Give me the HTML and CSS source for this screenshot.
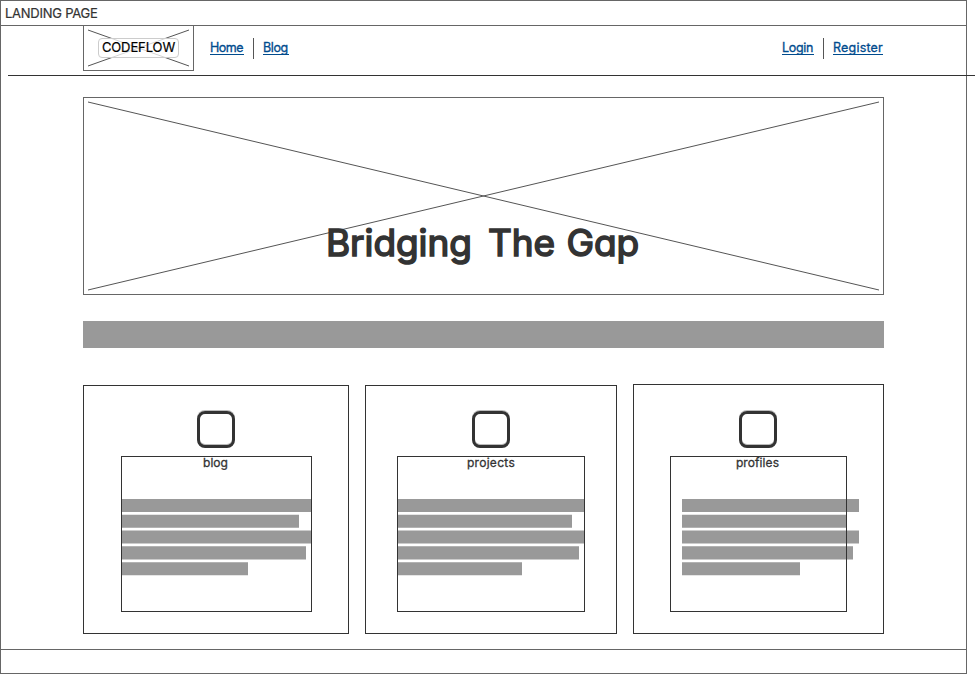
FILE: index.html
```html
<!DOCTYPE html>
<html lang="en">
<head>
<meta charset="utf-8">
<title>Landing Page</title>
<link rel="stylesheet" href="styles.css">
</head>
<body>
<div class="window">
  <header class="titlebar"><span>LANDING PAGE</span></header>
  <nav class="nav">
    <div class="logo">
      <svg class="cross" width="109" height="44" viewBox="0 0 109 44"><path d="M4 4 105 40M105 4 4 40"/></svg>
      <span class="logo-label">CODEFLOW</span>
    </div>
    <div class="links">
      <a class="home" href="#">Home</a><i class="sep"></i><a class="blog" href="#">Blog</a>
    </div>
    <div class="links account">
      <a class="login" href="#">Login</a><i class="sep"></i><a class="register" href="#">Register</a>
    </div>
  </nav>
  <hr class="rule">
  <main class="content">
    <section class="hero">
      <svg class="cross" width="799" height="196" viewBox="0 0 799 196"><path d="M4 4 795 192M795 4 4 192"/></svg>
      <h1>Bridging <span>The</span> Gap</h1>
    </section>
    <div class="banner"></div>
    <section class="cards">
      <article class="card card-blog">
        <div class="icon"></div>
        <div class="panel">
          <h2>blog</h2>
          <svg class="lines" width="190" height="77"><path d="M0 0h190v13H0zM0 15.7h177v13.1H0zM0 31.4h190v13.2H0zM0 47.3h184v13.2H0zM0 63.2h126v13.1H0z"/></svg>
        </div>
      </article>
      <article class="card card-projects">
        <div class="icon"></div>
        <div class="panel">
          <h2>projects</h2>
          <svg class="lines" width="187" height="77"><path d="M0 0h187v13H0zM0 15.7h174v13.1H0zM0 31.4h187v13.2H0zM0 47.3h181v13.2H0zM0 63.2h124v13.1H0z"/></svg>
        </div>
      </article>
      <article class="card card-profiles">
        <div class="icon"></div>
        <div class="panel">
          <h2>profiles</h2>
          <svg class="lines" width="177" height="77"><path d="M0 0h177v13H0zM0 15.7h165v13.1H0zM0 31.4h177v13.2H0zM0 47.3h171v13.2H0zM0 63.2h118v13.1H0z"/></svg>
        </div>
      </article>
    </section>
  </main>
  <footer class="statusbar"></footer>
</div>
</body>
</html>
```

FILE: styles.css
```css
* { box-sizing: border-box; }
body {
  margin: 0;
  background: #fff;
  color: #333;
  font: 13px/16px Inter, "Liberation Sans", sans-serif;
  font-feature-settings: "cv11", "ss03";
  overflow: hidden;
}
.window {
  width: 967px;
  height: 674px;
  border: 1px solid #666;
  display: flex;
  flex-direction: column;
}
.titlebar {
  height: 25px;
  border-bottom: 1px solid #666;
  padding: 4px 0 0 4px;
  letter-spacing: -0.25px;
  -webkit-text-stroke: .2px #333;
}
.nav {
  height: 49px;
  padding: 0 83px 0 82px;
  display: flex;
  align-items: flex-start;
}
.logo {
  width: 111px;
  height: 45px;
  border: 1px solid #666;
  border-top: 0;
  display: grid;
  place-items: center;
}
.logo > * { grid-area: 1 / 1; }
.cross { fill: none; stroke: #555; stroke-width: 1; }
.logo-label {
  position: relative;
  width: 81px;
  height: 20px;
  border: 1px solid #ccc;
  border-radius: 4px;
  background: rgba(255, 255, 255, .75);
  color: #000;
  line-height: 16px;
  text-align: center;
  letter-spacing: -0.1px;
  -webkit-text-stroke: .2px #000;
  margin-top: -1px;
}
.links { display: flex; padding-top: 12px; margin-left: 16px; }
.account { margin-left: auto; }
.links a {
  color: #004b8d;
  height: 16px;
  margin-top: 1px;
  font-size: 12.5px;
  line-height: 17px;
  border-bottom: 1px solid #004b8d;
  text-decoration: none;
  white-space: nowrap;
  -webkit-text-stroke: .3px #004b8d;
}
.home { width: 34px; letter-spacing: -0.5px; }
.blog { width: 26px; letter-spacing: -0.4px; }
.login { width: 32px; letter-spacing: -0.3px; }
.register { width: 50px; letter-spacing: 0.2px; }
.sep { width: 1px; height: 21px; background: #555; margin: 0 9px; }
.rule {
  width: 967px;
  height: 1px;
  margin: 0 0 0 7px;
  border: 0;
  background: #333;
  flex: none;
}
.content { width: 801px; margin: 21px 0 0 82px; height: 552px; flex: none; }
.hero {
  height: 198px;
  border: 1px solid #666;
  display: grid;
}
.hero > * { grid-area: 1 / 1; }
h1 {
  margin: 125px 0 0 242px;
  font-size: 37px;
  line-height: 40px;
  font-weight: 400;
  white-space: nowrap;
  letter-spacing: -0.1px;
  -webkit-text-stroke: 1.6px #333;
}
h1 span { margin: 0 1px 0 6px; }
.banner { height: 27px; background: #999; margin-top: 26px; }
.cards { display: flex; align-items: flex-end; height: 250px; margin-top: 36px; }
.card {
  height: 249px;
  border: 1px solid #333;
  display: flex;
  flex-direction: column;
}
.card-blog { width: 266px; padding: 25px 0 0 37px; margin-right: 16px; }
.card-projects { width: 252px; padding: 25px 0 0 31px; margin-right: 16px; }
.card-profiles { width: 251px; height: 250px; padding: 26px 0 0 36px; }
.icon {
  width: 38px;
  height: 37px;
  border: 3px solid #333;
  border-radius: 8px;
  box-shadow: 0 -1px #bbb, inset 0 -1px #bbb;
  margin-bottom: 8px;
  flex: none;
}
.card-blog .icon { margin-left: 76px; }
.card-projects .icon { margin-left: 75px; }
.card-profiles .icon { margin-left: 69px; }
.panel { height: 156px; border: 1px solid #333; }
.card-blog .panel { width: 191px; }
.card-projects .panel { width: 188px; }
.card-profiles .panel { width: 177px; }
h2 {
  margin: 0 2px 0 0;
  font-size: 12px;
  line-height: 11px;
  height: 42px;
  font-weight: 400;
  text-align: center;
  -webkit-text-stroke: .3px #333;
}
.card-projects h2 { margin: 0; letter-spacing: .3px; }
.card-profiles h2 { margin: 0 2px 0 0; letter-spacing: .1px; }
.lines { display: block; fill: #999; position: relative; z-index: -1; }
.card-profiles .lines { margin-left: 11px; }
.statusbar { flex: 1; border-top: 1px solid #666; }
```
